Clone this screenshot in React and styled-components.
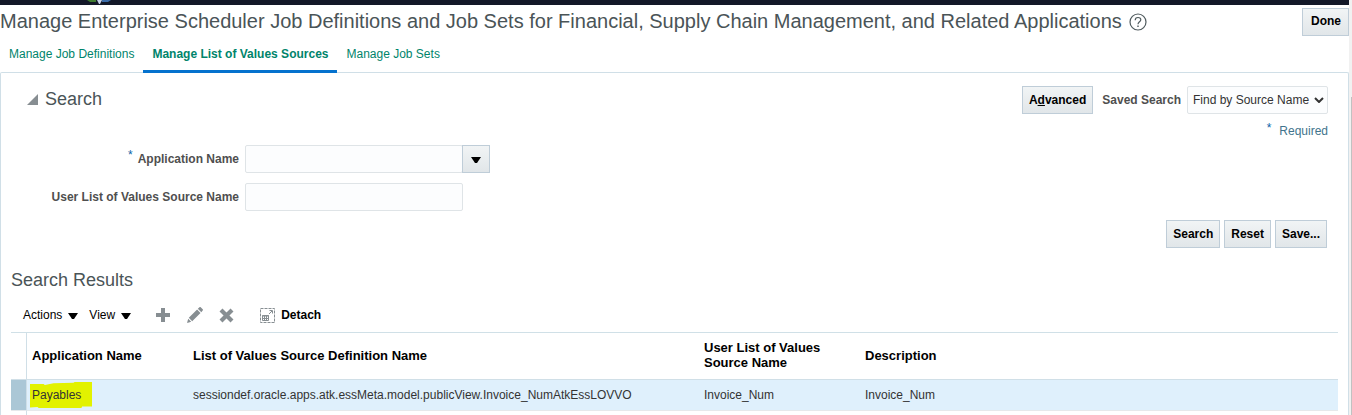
import styled, { createGlobalStyle } from 'styled-components';

const GlobalStyle = createGlobalStyle`
  * {
    box-sizing: border-box;
  }

  body {
    margin: 0;
    background: #fff;
    color: #333;
    font-family: "Liberation Sans", Arial, sans-serif;
    font-size: 12px;
    line-height: 14px;
    overflow: hidden;
  }

  button, input, select {
    font: inherit;
  }

  h1, h2 {
    margin: 0;
    font-weight: normal;
    color: #4a5457;
  }
`;

const Window = styled.div`
  display: flex;
  min-height: 100vh;
`;

const Page = styled.div`
  flex: 1;
  min-width: 0;
  display: flex;
  flex-direction: column;
`;

const ScrollTrack = styled.div`
  width: 3px;
  padding: 97px 0 0 2px;
  background: #f1f1f1;
  display: flex;
`;

const ScrollThumb = styled.div`
  flex: 1;
  background: #c1c1c1;
`;

const TopBar = styled.div`
  height: 5px;
  padding-left: 83px;
  background: #131828;

  svg {
    display: block;
  }
`;

const TitleRow = styled.header`
  display: flex;
  align-items: flex-start;
  justify-content: space-between;
  padding-top: 3px;
`;

const Title = styled.h1`
  display: flex;
  align-items: center;
  gap: 7px;
  font-size: 20px;
  line-height: 26px;
  white-space: nowrap;

  svg {
    margin-top: 2px;
  }
`;

const Button = styled.button`
  height: 28px;
  padding: 0 6px 1px;
  border: 1px solid #bfcdd8;
  background: linear-gradient(#f1f4f5, #e1e6e9);
  color: #000;
  font-weight: bold;
  white-space: nowrap;
`;

const DoneButton = styled(Button)`
  padding: 0 7px 2px 8px;
`;

const Tabs = styled.nav`
  display: flex;
  height: 38px;
  margin-bottom: -2px;
  z-index: 1;
`;

const Tab = styled.a`
  height: 37px;
  padding: 11px 9px 0;
  border-bottom: 3px solid ${(props) => (props.$active ? '#0572ce' : 'transparent')};
  color: #00846b;
  font-weight: ${(props) => (props.$active ? 'bold' : 'normal')};
  text-decoration: none;
  white-space: nowrap;
`;

const Panel = styled.main`
  flex: 1;
  border: 1px solid #d0dfe7;
  border-bottom: 0;
  border-radius: 2px 2px 0 0;
  padding: 13px 10px 0;
`;

const SearchHeader = styled.div`
  display: flex;
  align-items: center;
  padding: 0 10px 0 16px;
`;

const Heading = styled.h2`
  font-size: 18px;
  line-height: 26px;
`;

const SearchTitle = styled.div`
  display: flex;
  align-items: center;
  align-self: flex-start;
`;

const Disclosure = styled.button`
  display: flex;
  margin-right: 7px;
  padding: 0;
  border: 0;
  background: none;
`;

const SavedSearch = styled.div`
  display: flex;
  align-items: center;
  margin-left: auto;

  label {
    margin: 0 6px 0 9px;
    color: #4f4f4f;
    font-weight: bold;
  }
`;

const SelectWrap = styled.div`
  display: grid;
  align-items: center;

  select, svg {
    grid-area: 1 / 1;
  }

  svg {
    justify-self: end;
    margin-right: 4px;
    pointer-events: none;
  }
`;

const Select = styled.select`
  appearance: none;
  height: 28px;
  padding: 0 17px 0 5px;
  border: 1px solid #dfe4e7;
  border-radius: 2px;
  background: #fcfdfe;
  color: #333;
`;

const Star = styled.span`
  align-self: flex-start;
  color: #0b62a8;
`;

const Required = styled.div`
  display: flex;
  justify-content: flex-end;
  gap: 8px;
  padding: 7px 10px 0 0;
  color: #41748d;
  line-height: 20px;

  ${Star} {
    line-height: 14px;
  }
`;

const Form = styled.form`
  display: grid;
  grid-template-columns: 228px 1fr;
  gap: 10px 6px;
  padding-top: 4px;
`;

const FieldLabel = styled.label`
  display: flex;
  align-items: center;
  justify-content: flex-end;
  gap: 5px;
  height: 28px;
  color: #4f4f4f;
  font-weight: bold;

  ${Star} {
    padding-top: 3px;
    font-weight: normal;
  }
`;

const Field = styled.div`
  display: flex;
`;

const Input = styled.input`
  width: 218px;
  height: 28px;
  padding: 0 5px;
  border: 1px solid #dfe4e7;
  border-radius: 2px;
  background: #fcfdfe;
`;

const DropButton = styled(Button)`
  display: flex;
  align-items: center;
  justify-content: center;
  width: 28px;
  margin-left: -1px;
  padding: 2px 1px 0 0;
`;

const FormActions = styled.div`
  display: flex;
  justify-content: flex-end;
  gap: 4px;
  padding: 9px 11px 0 0;
`;

const Results = styled.section`
  padding-top: 19px;
`;

const Toolbar = styled.div`
  display: flex;
  align-items: center;
  height: 39px;
  padding: 5px 0 0 12px;
`;

const ToolButton = styled.button`
  display: flex;
  align-items: center;
  gap: 6px;
  margin-right: ${(props) => props.$after || 0}px;
  padding: 0;
  border: 0;
  background: none;
  color: #000;
  font-weight: ${(props) => (props.$bold ? 'bold' : 'normal')};

  svg {
    margin-top: ${(props) => (props.$menu ? 2 : 0)}px;
  }
`;

const Table = styled.table`
  width: 100%;
  table-layout: fixed;
  border-collapse: separate;
  border-spacing: 0;
  border-top: 1px solid #d0e0e7;

  th {
    height: 47px;
    padding: 0 5px 2px;
    border-bottom: 1px solid #d0dfe7;
    color: #000;
    font-size: 13px;
    text-align: left;
    line-height: 15px;
  }

  td {
    height: 31px;
    padding: 0 5px;
    border-bottom: 1px solid #e6e9eb;
    background: #dff0fc;
  }

  th:first-child, td:first-child {
    padding: 0;
    border-right: 1px solid #d0dfe7;
  }

  td:first-child {
    background: #abc7d6;
  }
`;

const TableEnd = styled.div`
  width: 16px;
  height: 5px;
  border-right: 1px solid #d0dfe7;
`;

const Marked = styled.mark`
  display: block;
  width: 62px;
  margin-left: -2px;
  padding: 6px 2px;
  background: #e2f200;
  color: #333;
  clip-path: polygon(0 8%, 22% 8%, 24% 12%, 38% 5%, 70% 3%, 72% 0, 100% 0, 100% 94%, 84% 94%, 83% 100%, 14% 100%, 12% 96%, 0 98%);
`;

const Caret = () => (
  <svg width="10" height="6" viewBox="0 0 10 6" aria-hidden="true">
    <path d="M0 0h10L6 6H4z" fill="#000" />
  </svg>
);

const Globe = () => (
  <svg width="30" height="5" viewBox="0 0 30 5" aria-hidden="true">
    <path d="M4 0h9v2H7z" fill="#3f7a30" />
    <path d="M14 0h5l-2 4h-1z" fill="#c9d4ea" />
    <path d="M19 0h9l-3 2h-6z" fill="#3a6ba8" />
  </svg>
);

const HelpIcon = () => (
  <svg width="18" height="18" viewBox="0 0 18 18" fill="none" stroke="#4f5a5d" aria-hidden="true">
    <circle cx="9" cy="9" r="8" strokeWidth="1.2" />
    <path d="M6.2 7.2C6.2 3.6 11.8 3.7 11.8 6.8 11.8 8.7 9 8.9 9 11.2" strokeWidth="1.2" />
    <path d="M9 12.5v1.6" strokeWidth="1.4" />
  </svg>
);

const PlusIcon = () => (
  <svg width="14" height="14" viewBox="0 0 14 14" aria-hidden="true">
    <path d="M5 0h4v5h5v4H9v5H5V9H0V5h5z" fill="#878e92" />
  </svg>
);

const PencilIcon = () => (
  <svg width="16" height="16" viewBox="0 0 16 16" fill="#878e92" aria-hidden="true">
    <path d="M0 16l1.2-4.2 3 3zM1.8 10.8l8.3-8.3 3.4 3.4-8.3 8.3zM10.8 1.7L12.5.2c.4-.3.8-.3 1.2 0l2 2c.4.4.4.8 0 1.2l-1.4 1.9z" />
  </svg>
);

const DeleteIcon = () => (
  <svg width="15" height="15" viewBox="0 0 15 15" aria-hidden="true">
    <path d="M2 2l11 11M13 2L2 13" stroke="#878e92" strokeWidth="4.2" />
  </svg>
);

const DetachIcon = () => (
  <svg width="15" height="15" viewBox="0 0 15 15" fill="none" stroke="#878e92" aria-hidden="true">
    <path d="M.5.5h14v14H.5z" strokeDasharray="3 1" />
    <path d="M2.5 7.5h6v5h-6zM2 8h7M4.5 8v5M6.5 8v5M2.5 10.5h6M9 6l3-3M9.5 2.5h3v3" />
  </svg>
);

function App() {
  return (
    <Window>
      <GlobalStyle />
      <Page>
        <TopBar><Globe /></TopBar>
        <TitleRow>
          <Title>
            Manage Enterprise Scheduler Job Definitions and Job Sets for Financial, Supply Chain Management, and Related Applications
            <HelpIcon />
          </Title>
          <DoneButton type="button">Done</DoneButton>
        </TitleRow>
        <Tabs>
          <Tab href="#definitions">Manage Job Definitions</Tab>
          <Tab href="#sources" $active aria-current="page">Manage List of Values Sources</Tab>
          <Tab href="#sets">Manage Job Sets</Tab>
        </Tabs>
        <Panel>
          <SearchHeader>
            <SearchTitle>
              <Disclosure type="button" aria-label="Collapse Search">
                <svg width="11" height="11" viewBox="0 0 11 11"><path d="M11 0v11H0z" fill="#878e92" /></svg>
              </Disclosure>
              <Heading>Search</Heading>
            </SearchTitle>
            <SavedSearch>
              <Button type="button">A<u>d</u>vanced</Button>
              <label htmlFor="saved">Saved Search</label>
              <SelectWrap>
                <Select id="saved">
                  <option>Find by Source Name</option>
                </Select>
                <svg width="10" height="6" viewBox="0 0 10 6" fill="none" stroke="#333" strokeWidth="2">
                  <path d="M1 1l4 4 4-4" />
                </svg>
              </SelectWrap>
            </SavedSearch>
          </SearchHeader>
          <Required><Star>*</Star>Required</Required>
          <Form>
            <FieldLabel htmlFor="app"><Star>*</Star>Application Name</FieldLabel>
            <Field>
              <Input id="app" />
              <DropButton type="button" aria-label="Application Name list"><Caret /></DropButton>
            </Field>
            <FieldLabel htmlFor="source">User List of Values Source Name</FieldLabel>
            <Field><Input id="source" /></Field>
          </Form>
          <FormActions>
            <Button type="button">Search</Button>
            <Button type="button">Reset</Button>
            <Button type="button">Save...</Button>
          </FormActions>
          <Results>
            <Heading>Search Results</Heading>
            <Toolbar>
              <ToolButton type="button" $menu $after={11}>Actions <Caret /></ToolButton>
              <ToolButton type="button" $menu $after={25}>View <Caret /></ToolButton>
              <ToolButton type="button" $after={17} aria-label="Create"><PlusIcon /></ToolButton>
              <ToolButton type="button" $after={16} aria-label="Edit"><PencilIcon /></ToolButton>
              <ToolButton type="button" $after={26} aria-label="Delete"><DeleteIcon /></ToolButton>
              <ToolButton type="button" $bold><DetachIcon />Detach</ToolButton>
            </Toolbar>
            <Table>
              <colgroup>
                <col style={{ width: 16 }} />
                <col style={{ width: 161 }} />
                <col style={{ width: 511 }} />
                <col style={{ width: 161 }} />
                <col />
              </colgroup>
              <thead>
                <tr>
                  <th />
                  <th>Application Name</th>
                  <th>List of Values Source Definition Name</th>
                  <th>User List of Values Source Name</th>
                  <th>Description</th>
                </tr>
              </thead>
              <tbody>
                <tr>
                  <td />
                  <td><Marked>Payables</Marked></td>
                  <td>sessiondef.oracle.apps.atk.essMeta.model.publicView.Invoice_NumAtkEssLOVVO</td>
                  <td>Invoice_Num</td>
                  <td>Invoice_Num</td>
                </tr>
              </tbody>
            </Table>
            <TableEnd />
          </Results>
        </Panel>
      </Page>
      <ScrollTrack><ScrollThumb /></ScrollTrack>
    </Window>
  );
}

export default App;
